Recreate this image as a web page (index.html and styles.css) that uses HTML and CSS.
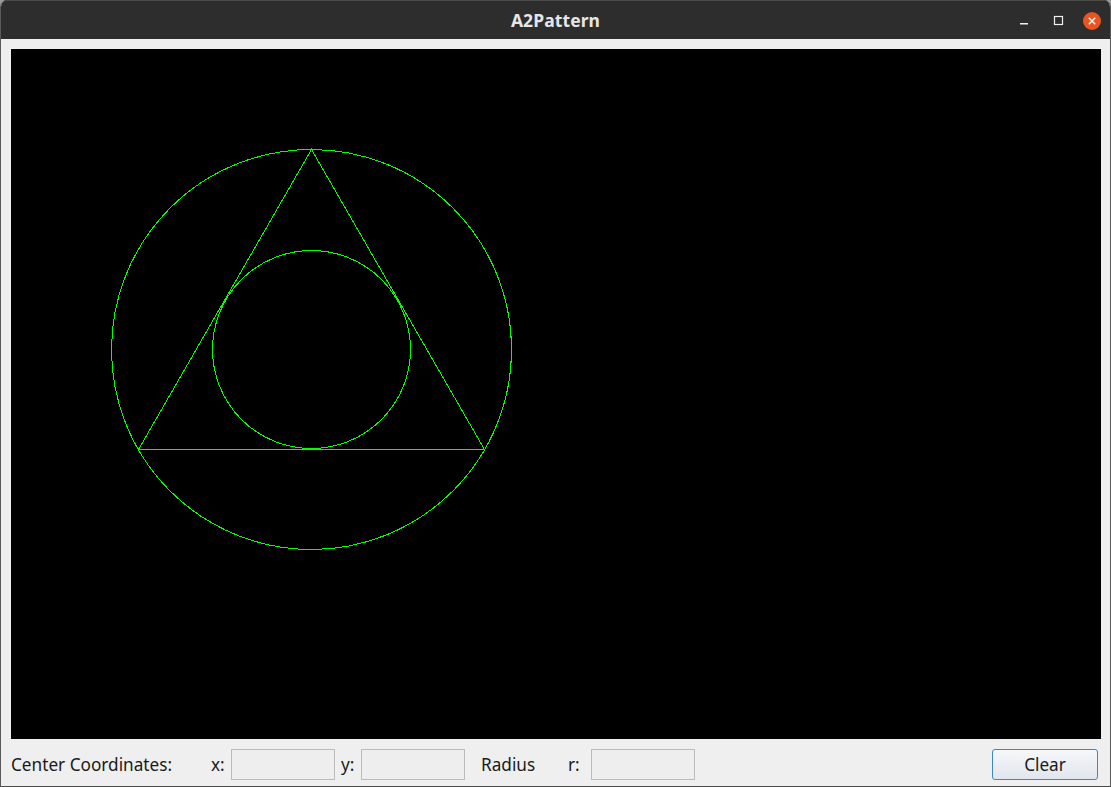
FILE: index.html
```html
<!DOCTYPE html>
<html>
<head>
<meta charset="utf-8">
<title>A2Pattern</title>
<link rel="stylesheet" href="styles.css">
</head>
<body>
<div class="window">
  <div class="titlebar">
    <span class="title">A2Pattern</span>
    <div class="wm-controls">
      <svg class="wm-btn" width="20" height="20" viewBox="0 0 20 20"><rect x="6" y="12" width="8" height="1.5" fill="#f0f0f0"/></svg>
      <svg class="wm-btn" width="20" height="20" viewBox="0 0 20 20"><rect x="6.5" y="5.5" width="8" height="8" fill="none" stroke="#f0f0f0" stroke-width="1.2"/></svg>
      <svg class="wm-btn" width="20" height="20" viewBox="0 0 20 20"><circle cx="10" cy="10" r="9" fill="#e95420"/><path d="M6.8 6.8 L13.2 13.2 M13.2 6.8 L6.8 13.2" stroke="#ffffff" stroke-width="1.4"/></svg>
    </div>
  </div>
  <div class="content">
    <svg class="canvas" width="1090" height="690" viewBox="0 0 1090 690">
      <rect width="1090" height="690" fill="#000"/>
      <g fill="none" stroke="#00ff00" stroke-width="1" shape-rendering="crispEdges">
        <circle cx="300.5" cy="300.5" r="200"/>
        <circle cx="300.5" cy="300.5" r="99"/>
        <polygon points="300.5,100.5 127.5,400.5 473.5,400.5"/>
      </g>
    </svg>
    <div class="controls">
      <span class="lbl lbl-center">Center Coordinates:</span>
      <span class="lbl lbl-x">x:</span>
      <span class="field"></span>
      <span class="lbl lbl-y">y:</span>
      <span class="field"></span>
      <span class="lbl lbl-radius">Radius</span>
      <span class="lbl lbl-r">r:</span>
      <span class="field"></span>
      <span class="spacer"></span>
      <button class="btn">Clear</button>
    </div>
  </div>
</div>
</body>
</html>
```
FILE: styles.css
```css
html, body {
  margin: 0;
  padding: 0;
  background: #9a9a9a;
}
body {
  width: 1111px;
  height: 787px;
  overflow: hidden;
  font-family: "Noto Sans", "DejaVu Sans", sans-serif;
}
.window {
  width: 1111px;
  height: 787px;
  box-sizing: border-box;
  display: flex;
  flex-direction: column;
  border-radius: 7px 7px 0 0;
  overflow: hidden;
  background: #efefef;
  border-left: 1px solid #5a5a5a;
  border-right: 1px solid #5a5a5a;
  border-bottom: 1px solid #4a4a4a;
}
.titlebar {
  height: 39px;
  flex: none;
  background: #2d2d2d;
  border-top: 1px solid #4a4a4a;
  box-sizing: border-box;
  position: relative;
  display: flex;
  align-items: center;
  justify-content: center;
  margin: 0 -1px;
}
.title {
  color: #e6e6e6;
  font-weight: bold;
  font-size: 17.5px;
  letter-spacing: 0.1px;
}
.wm-controls {
  position: absolute;
  right: 9px;
  top: 10px;
  display: flex;
  gap: 14px;
}
.wm-btn {
  display: block;
}
.content {
  flex: 1;
  display: flex;
  flex-direction: column;
  padding: 10px 9px 6px 10px;
}
.canvas {
  display: block;
  flex: none;
}
.controls {
  margin-top: 10px;
  height: 31px;
  display: flex;
  align-items: center;
  padding-right: 3px;
  font-size: 17.2px;
  color: #1a1a1a;
}
.lbl {
  flex: none;
  white-space: nowrap;
}
.lbl-center { width: 200px; }
.lbl-x { width: 20px; }
.lbl-y { width: 20px; margin-left: 6px; }
.lbl-radius { width: 87px; margin-left: 16px; }
.lbl-r { width: 23px; }
.field {
  flex: none;
  width: 104px;
  height: 31px;
  box-sizing: border-box;
  border: 1px solid #bcbcbc;
  background: #eeeeee;
}
.spacer { flex: 1; }
.btn {
  flex: none;
  width: 106px;
  height: 31px;
  box-sizing: border-box;
  border: 1px solid #3f87c2;
  border-radius: 3px;
  background: linear-gradient(#f6f8fa, #e0e6ed);
  font-family: inherit;
  font-size: 17.2px;
  color: #1a1a1a;
  padding: 0;
}
```
